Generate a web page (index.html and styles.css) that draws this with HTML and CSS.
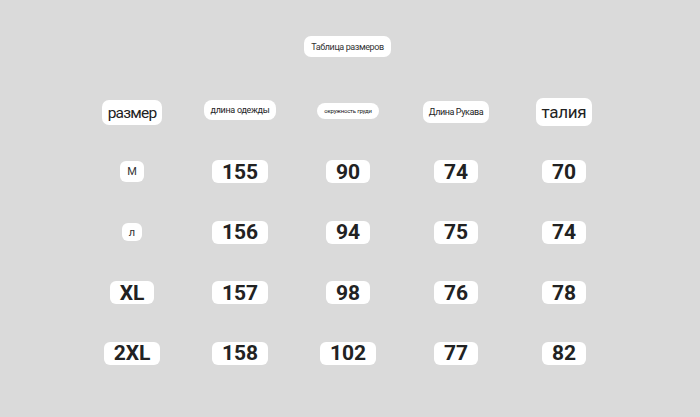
FILE: index.html
```html
<!DOCTYPE html>
<html lang="ru">
<head>
<meta charset="utf-8">
<title>Таблица размеров</title>
<link rel="stylesheet" href="styles.css">
</head>
<body>
<main class="page">
  <div class="title-row"><span class="pill title">Таблица размеров</span></div>
  <div class="table">
    <div class="cell"><span class="pill head head-lg">размер</span></div>
    <div class="cell"><span class="pill head head-sm">длина одежды</span></div>
    <div class="cell"><span class="pill head head-xs">окружность груди</span></div>
    <div class="cell"><span class="pill head head-md">Длина Рукава</span></div>
    <div class="cell"><span class="pill head head-xl">талия</span></div>

    <div class="cell"><span class="pill size-sm">М</span></div>
    <div class="cell"><span class="pill num">155</span></div>
    <div class="cell"><span class="pill num">90</span></div>
    <div class="cell"><span class="pill num">74</span></div>
    <div class="cell"><span class="pill num">70</span></div>

    <div class="cell"><span class="pill size-sm size-l">л</span></div>
    <div class="cell"><span class="pill num">156</span></div>
    <div class="cell"><span class="pill num">94</span></div>
    <div class="cell"><span class="pill num">75</span></div>
    <div class="cell"><span class="pill num">74</span></div>

    <div class="cell"><span class="pill num">XL</span></div>
    <div class="cell"><span class="pill num">157</span></div>
    <div class="cell"><span class="pill num">98</span></div>
    <div class="cell"><span class="pill num">76</span></div>
    <div class="cell"><span class="pill num">78</span></div>

    <div class="cell"><span class="pill num">2XL</span></div>
    <div class="cell"><span class="pill num">158</span></div>
    <div class="cell"><span class="pill num">102</span></div>
    <div class="cell"><span class="pill num">77</span></div>
    <div class="cell"><span class="pill num">82</span></div>
  </div>
</main>
</body>
</html>
```
FILE: styles.css
```css
* { box-sizing: border-box; }
html, body {
  margin: 0;
  padding: 0;
  background: #dadada;
}
body {
  font-family: Roboto, "Noto Sans", sans-serif;
  color: #222;
  width: 700px;
  height: 417px;
  overflow: hidden;
}
.page {
  padding-top: 36px;
}
.title-row {
  display: flex;
  justify-content: center;
  padding-right: 5px;
}
.pill {
  display: inline-flex;
  align-items: center;
  justify-content: center;
  background: #fff;
  border-radius: 6px;
  white-space: nowrap;
}
.title {
  height: 21px;
  padding: 0 7px;
  font-size: 9px;
  letter-spacing: -0.4px;
  color: #333;
  border-radius: 7px;
}
.table {
  margin: 24px 0 0 78px;
  display: grid;
  grid-template-columns: repeat(5, 108px);
  grid-auto-rows: 60.5px;
}
.cell {
  display: flex;
  align-items: center;
  justify-content: center;
}
.head { color: #222; }
.head-lg {
  height: 25px;
  padding: 0 6px;
  font-size: 15.5px;
  letter-spacing: -0.8px;
  border-radius: 7px;
  margin-top: 3px;
}
.head-xl {
  height: 28px;
  padding: 0 6px;
  font-size: 17px;
  letter-spacing: -0.3px;
  border-radius: 7px;
  margin-top: 2px;
}
.head-sm {
  height: 20px;
  padding: 0 7px;
  font-size: 9px;
  letter-spacing: -0.3px;
  border-radius: 8px;
  margin-top: -3px;
}
.head-xs {
  height: 16px;
  padding: 0 7px;
  font-size: 6px;
  letter-spacing: -0.2px;
  border-radius: 8px;
  margin-top: -1px;
}
.head-md {
  height: 22px;
  padding: 0 6px;
  font-size: 9px;
  letter-spacing: -0.4px;
  border-radius: 7px;
  margin-top: 1px;
}
.num {
  height: 23px;
  padding: 0 10px;
  font-size: 21px;
  font-weight: 700;
  color: #222;
}
.size-sm {
  height: 21px;
  width: 24px;
  font-size: 11px;
  color: #333;
}
.size-l {
  height: 18px;
  width: 20px;
}
```
